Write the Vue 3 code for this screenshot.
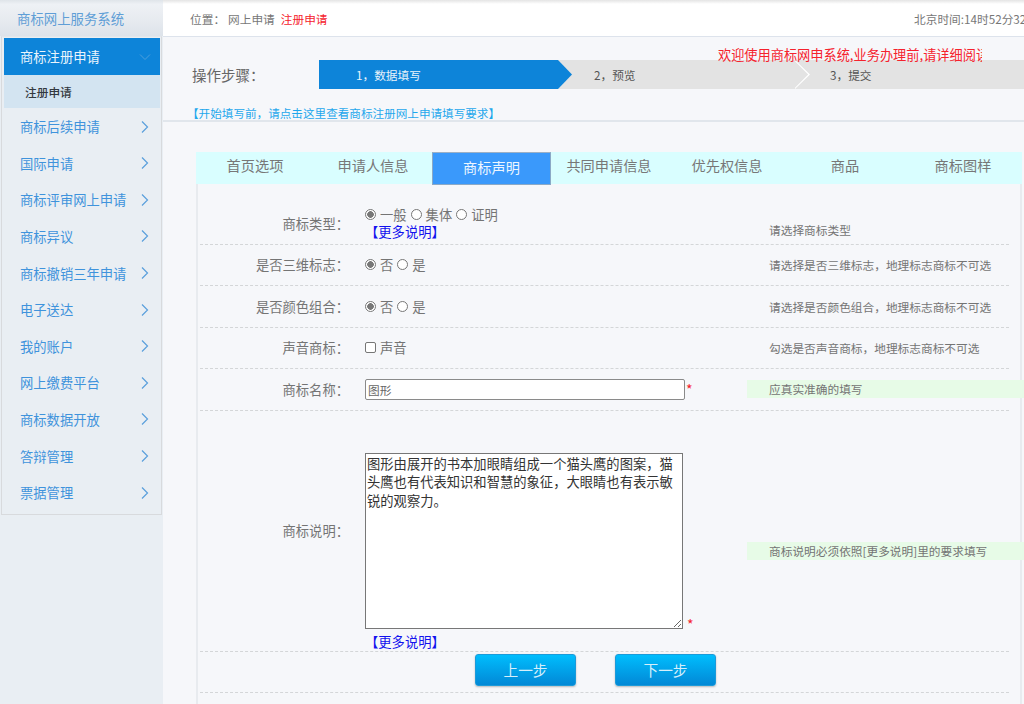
<script setup>
const menus = ['商标后续申请','国际申请','商标评审网上申请','商标异议','商标撤销三年申请','电子送达','我的账户','网上缴费平台','商标数据开放','答辩管理','票据管理']
const tabs = ['首页选项','申请人信息','商标声明','共同申请信息','优先权信息','商品','商标图样']
const noteText = '图形由展开的书本加眼睛组成一个猫头鹰的图案\uFF0C猫头鹰也有代表知识和智慧的象征\uFF0C大眼睛也有表示敏锐的观察力。'
</script>

<template>
  <div class="page">
    <aside class="side">
      <div class="brand">商标网上服务系统</div>
      <nav class="menu">
        <div class="item active">
          <span>商标注册申请</span>
          <svg class="chev" width="12" height="12" viewBox="0 0 12 12"><path d="M1 3.5 L6 8.5 L11 3.5" fill="none" stroke="#4d9fdc" stroke-width="1"/></svg>
        </div>
        <div class="sub">注册申请</div>
        <div v-for="m in menus" :key="m" class="item">
          <span>{{ m }}</span>
          <svg class="chev" width="12" height="14" viewBox="0 0 12 14"><path d="M3 1.5 L8.5 7 L3 12.5" fill="none" stroke="#5a9fdc" stroke-width="1.2"/></svg>
        </div>
      </nav>
    </aside>

    <main class="main">
      <header class="top">
        <div class="crumb">
          <span class="crumb-label">位置&#xFF1A;</span>
          <span>网上申请</span>
          <span class="red">注册申请</span>
        </div>
        <div class="clock">北京时间:14时52分32秒</div>
      </header>

      <section class="steps-wrap">
        <div class="notice"><span>欢迎使用商标网申系统,业务办理前,请详细阅读</span></div>
        <div class="steps-row">
          <div class="steps-title">操作步骤&#xFF1A;</div>
          <div class="steps">
            <div class="step s1">1&#xFF0C;数据填写</div>
            <div class="step s2">2&#xFF0C;预览</div>
            <div class="step s3">3&#xFF0C;提交</div>
          </div>
        </div>
        <div class="tip">【开始填写前&#xFF0C;请点击这里查看商标注册网上申请填写要求】</div>
      </section>

      <section class="form-area">
        <div class="tabs">
          <div v-for="t in tabs" :key="t" class="tab" :class="{ on: t === '商标声明' }">{{ t }}</div>
        </div>
        <div class="form">
          <div class="row r60">
            <div class="label lower">商标类型&#xFF1A;</div>
            <div class="field column pushed">
              <div class="opts">
                <span class="radio checked"></span><span>一般</span>
                <span class="radio"></span><span>集体</span>
                <span class="radio"></span><span>证明</span>
              </div>
              <div class="more">【更多说明】</div>
            </div>
            <div class="hint hint-low">请选择商标类型</div>
          </div>
          <div class="row">
            <div class="label">是否三维标志&#xFF1A;</div>
            <div class="field opts">
              <span class="radio checked"></span><span>否</span>
              <span class="radio"></span><span>是</span>
            </div>
            <div class="hint">请选择是否三维标志&#xFF0C;地理标志商标不可选</div>
          </div>
          <div class="row">
            <div class="label">是否颜色组合&#xFF1A;</div>
            <div class="field opts">
              <span class="radio checked"></span><span>否</span>
              <span class="radio"></span><span>是</span>
            </div>
            <div class="hint">请选择是否颜色组合&#xFF0C;地理标志商标不可选</div>
          </div>
          <div class="row">
            <div class="label">声音商标&#xFF1A;</div>
            <div class="field opts">
              <span class="check"></span><span>声音</span>
            </div>
            <div class="hint">勾选是否声音商标&#xFF0C;地理标志商标不可选</div>
          </div>
          <div class="row">
            <div class="label">商标名称&#xFF1A;</div>
            <div class="field">
              <input class="name-input" value="图形" />
              <span class="star">*</span>
            </div>
            <div class="hint green">应真实准确的填写</div>
          </div>
          <div class="row tall">
            <div class="label">商标说明&#xFF1A;</div>
            <div class="field column bottom">
              <div class="ta-line">
                <textarea class="note" :value="noteText"></textarea>
                <span class="star low">*</span>
              </div>
              <div class="more tight">【更多说明】</div>
            </div>
            <div class="hint green green-low">商标说明必须依照[更多说明]里的要求填写</div>
          </div>
          <div class="row btns">
            <button class="btn">上一步</button>
            <button class="btn">下一步</button>
          </div>
        </div>
      </section>
    </main>
  </div>
</template>

<style>
html, body { margin: 0; height: 100%; overflow: hidden; background: #f6f7fa; }
</style>

<style scoped>
* { box-sizing: border-box; }
.page {
  display: flex;
  width: 1024px;
  height: 704px;
  overflow: hidden;
  font-family: "Noto Sans CJK SC", "Liberation Sans", sans-serif;
  font-size: 13.3px;
  color: #747474;
  background: #f6f7fa;
}
.side { width: 163px; flex: none; background: #e9eef3; }
.brand {
  height: 36px;
  padding-left: 17px;
  line-height: 37px;
  font-size: 13.4px;
  color: #5f9ed6;
  background: linear-gradient(#dfe4e9 0, #eef1f5 12%, #e6eaef 60%, #dde3ea 100%);
}
.menu {
  width: 161px;
  margin-left: 1px;
  padding: 1px 1px 3px 2px;
  border: 1px solid #d8dadd;
  border-top-color: #e3e6ea;
}
.item {
  height: 36.6px;
  display: flex;
  align-items: center;
  justify-content: space-between;
  padding: 0 9px 0 16px;
  font-size: 13.3px;
  color: #3f93dc;
}
.item.active { height: 37px; background: #0d84d9; color: #eaf4fc; }
.sub {
  height: 33.4px;
  padding-left: 21px;
  line-height: 34px;
  font-size: 11.7px;
  font-weight: 500;
  color: #33393f;
  background: #d3e4f1;
}
.main { flex: 1; min-width: 0; display: flex; flex-direction: column; }
.top {
  height: 37px;
  flex: none;
  display: flex;
  align-items: center;
  justify-content: space-between;
  padding-left: 27px;
  font-size: 11.7px;
  background: linear-gradient(#e4e4e4 0, #ffffff 4px);
  border-bottom: 1px solid #dde3ec;
  white-space: nowrap;
  overflow: hidden;
}
.crumb { display: flex; gap: 6px; color: #777; }
.crumb-label { width: 32px; }
.red { color: #f5222d; }
.clock { width: 110px; flex: none; color: #777; overflow: hidden; }
.steps-wrap {
  position: relative;
  height: 85px;
  flex: none;
  border-bottom: 2px solid #e1e6ec;
}
.notice {
  position: absolute;
  left: 555px;
  top: 10px;
  width: 264px;
  height: 15px;
  overflow: hidden;
  white-space: nowrap;
  font-size: 13.2px;
  line-height: 15px;
  color: #f5222d;
  z-index: 1;
}
.steps-row { display: flex; align-items: center; height: 29px; margin-top: 23px; }
.steps-title { width: 156px; padding-left: 29px; font-size: 14.5px; color: #666; white-space: nowrap; }
.steps { flex: 1; display: flex; height: 29px; background: #e3e3e3; }
.step { position: relative; font-size: 11.7px; line-height: 30px; color: #555; }
.s1 { width: 239px; padding-left: 37px; color: #e8f3fb; background: #0d84d9; }
.s2 { width: 238px; padding-left: 36px; }
.s3 { flex: 1; padding-left: 34px; }
.s1::after {
  content: "";
  position: absolute;
  right: -14px;
  top: 0;
  width: 14px;
  height: 29px;
  background: #0d84d9;
  clip-path: polygon(0 0, 100% 50%, 0 100%);
  z-index: 1;
}
.s2::after {
  content: "";
  position: absolute;
  top: 0;
  right: -14px;
  width: 15px;
  height: 29px;
  background: #fff;
  clip-path: polygon(0 0, 100% 50%, 0 100%, 0 96%, 88% 50%, 0 4%);
}
.tip {
  margin-top: 17px;
  padding-left: 24px;
  font-size: 11.6px;
  line-height: 15px;
  color: #1ea7ec;
  white-space: nowrap;
}
.form-area { flex: 1; padding: 30px 2px 0 33px; min-height: 0; }
.tabs { display: flex; height: 32px; background: #d9feff; }
.tab {
  width: 118px;
  text-align: center;
  font-size: 14.2px;
  line-height: 27px;
  color: #777;
}
.tab.on {
  position: relative;
  width: 119px;
  margin-right: -1px;
  height: 33px;
  line-height: 28px;
  background: #3a99fb;
  color: #edf6ff;
  border: 1px solid #8ba9c6;
  border-top-color: #9bb0c6;
}
.form {
  padding: 18px 0 0 2px;
  border-left: 2px solid #e8ebef;
  border-right: 2px solid #e8ebef;
  min-height: 520px;
}
.row {
  display: flex;
  align-items: center;
  width: 809px;
  height: 41.5px;
  border-bottom: 1px dashed #d4d6d8;
}
.r60 { height: 42.5px; align-items: flex-start; }
.tall { height: 241px; }
.label { width: 149px; flex: none; text-align: right; white-space: nowrap; }
.lower { padding-top: 12px; }
.field { width: 404px; flex: none; margin-left: 16px; display: flex; align-items: center; }
.column { flex-direction: column; align-items: flex-start; }
.pushed { padding-top: 3px; }
.bottom { align-self: flex-end; padding-bottom: 1px; }
.opts { display: flex; align-items: center; gap: 4px; line-height: 19px; }
.radio {
  width: 11px;
  height: 11px;
  border: 1px solid #777;
  border-radius: 50%;
  background: #fff;
  flex: none;
}
.radio.checked { background: radial-gradient(circle, #777 0 3px, #fff 3.6px); }
.check {
  width: 11px;
  height: 11px;
  border: 1px solid #767676;
  border-radius: 2px;
  background: #fff;
}
.more {
  font-size: 13.3px;
  line-height: 16px;
  color: #1111ee;
}
.tight { margin-top: 5px; }
.hint { flex: 1; white-space: nowrap; font-size: 11.7px; }
.hint-low { padding-top: 19px; }
.green {
  align-self: center;
  height: 18px;
  line-height: 18px;
  margin: 0 -15px 0 -22px;
  padding-left: 22px;
  background: #e7fbe7;
}
.green-low { margin-top: 41px; }
.name-input {
  width: 320px;
  height: 21px;
  padding: 0 2px;
  border: 1px solid #8a8a8a;
  border-radius: 2px;
  font: 11.7px "Noto Sans CJK SC", sans-serif;
  color: #666;
  background: #fff;
  outline: none;
}
.star { color: #f5222d; font-size: 14px; line-height: 1; margin-left: 1px; }
.ta-line { display: flex; align-items: flex-end; }
.low { margin-left: 4px; margin-bottom: -2px; }
.note {
  display: block;
  width: 318px;
  height: 176px;
  padding: 1px;
  border: 1px solid #777;
  border-radius: 0;
  font: 13.3px/18.5px "Noto Sans CJK SC", sans-serif;
  color: #333;
  background: #fff;
  outline: none;
}
.btns { justify-content: flex-start; align-items: flex-start; gap: 39px; padding: 2px 0 0 275px; }
.btn {
  width: 101px;
  height: 32px;
  border: 1px solid #1c9ad9;
  border-radius: 3px;
  font: 14.7px "Noto Sans CJK SC", sans-serif;
  color: #d6effb;
  background: linear-gradient(#00bdfd, #0288d6);
  box-shadow: 0 1px 2px rgba(0,0,0,.25);
}
</style>
